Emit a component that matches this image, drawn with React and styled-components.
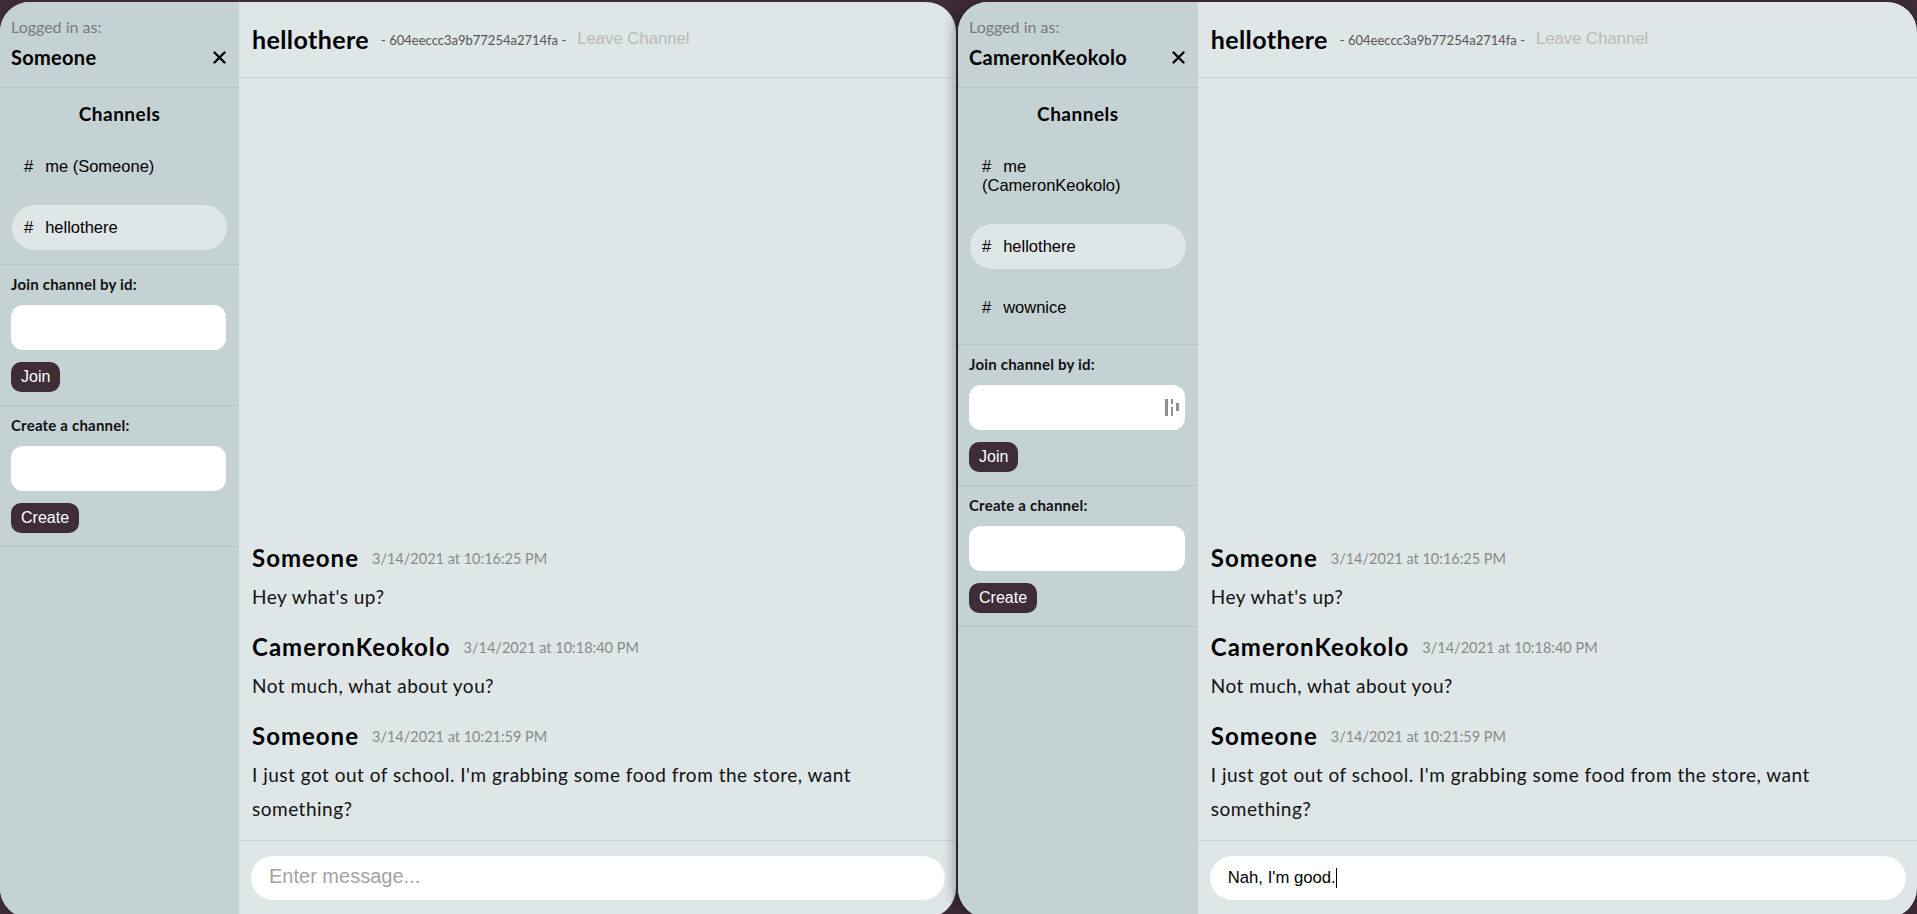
import React from "react";
import styled, { createGlobalStyle } from "styled-components";

const GlobalStyle = createGlobalStyle`
	html, body {
		margin: 0;
		padding: 0;
		background: #3d2c36;
		overflow: hidden;
	}
	* {
		box-sizing: border-box;
	}
`;

const Desktop = styled.div`
	display: grid;
	grid-template-columns: 956px 1fr;
	gap: 2px;
	padding-top: 2px;
	height: 914px;
	overflow: hidden;
	background: #3d2c36;
`;

const Window = styled.div`
	display: flex;
	height: 916px;
	border-radius: 30px;
	overflow: hidden;
	background: #dfe6e7;
	box-shadow: ${(props) =>
		props.raised ? "-5px 0 12px rgba(0, 0, 0, 0.28)" : "none"};
	position: relative;
	z-index: ${(props) => (props.raised ? 2 : 1)};
	font-family: "Lato", "Noto Sans", sans-serif;
	color: #111;
`;

const Sidebar = styled.aside`
	width: 25%;
	flex-shrink: 0;
	background: #c4d2d3;
	display: flex;
	flex-direction: column;
`;

const SideHeader = styled.div`
	padding: 14px 12px 17px 11px;
	border-bottom: 1px solid #b2c1c3;
`;

const LoggedLabel = styled.div`
	font-size: 16px;
	line-height: 22px;
	color: #7a7a7a;
`;

const NameRow = styled.div`
	display: flex;
	justify-content: space-between;
	align-items: center;
	margin-top: 6px;
	height: 26px;
`;

const Username = styled.div`
	font-size: 20px;
	font-weight: 700;
	letter-spacing: 0.3px;
	color: #000;
`;

const CloseButton = styled.button`
	border: none;
	background: none;
	padding: 0;
	margin-right: 1px;
	display: flex;
	align-items: center;
	cursor: pointer;
`;

const ChannelSection = styled.div`
	padding: 14px 12px;
	border-bottom: 1px solid #b2c1c3;
`;

const SectionTitle = styled.div`
	text-align: center;
	font-size: 19px;
	font-weight: 700;
	letter-spacing: 0.5px;
	line-height: 24px;
	color: #000;
`;

const ChannelList = styled.div`
	display: flex;
	flex-direction: column;
	gap: 16px;
	margin-top: 18px;
`;

const ChannelItem = styled.div`
	padding: 13px 40px 13px 12px;
	border-radius: 23px;
	background: ${(props) => (props.active ? "#dfe6e7" : "transparent")};
	font-family: "Liberation Sans", Arial, sans-serif;
	font-size: 16.5px;
	line-height: 19px;
	color: #000;
	cursor: pointer;
`;

const Hash = styled.span`
	margin-right: 12px;
`;

const FormSection = styled.div`
	padding: 10px 13px 13px 11px;
	border-bottom: 1px solid #b2c1c3;
	display: flex;
	flex-direction: column;
	align-items: flex-start;
`;

const FormLabel = styled.label`
	font-size: 15px;
	font-weight: 700;
	letter-spacing: 0.2px;
	line-height: 18px;
	color: #111;
`;

const FieldWrap = styled.div`
	position: relative;
	width: 100%;
	margin-top: 12px;
`;

const TextField = styled.input`
	display: block;
	width: 100%;
	height: 45px;
	border: none;
	border-radius: 12px;
	background: #fff;
	padding: 0 14px;
	font-family: "Liberation Sans", Arial, sans-serif;
	font-size: 16px;
	outline: none;
`;

const ManagerIcon = styled.svg`
	position: absolute;
	right: 5px;
	top: 13px;
`;

const ActionButton = styled.button`
	margin-top: 12px;
	height: 30px;
	padding: 0 10px;
	border: none;
	border-radius: 10px;
	background: #3e2d36;
	color: #fff;
	font-family: "Liberation Sans", Arial, sans-serif;
	font-size: 16px;
	cursor: pointer;
`;

const Main = styled.main`
	flex: 1;
	min-width: 0;
	display: flex;
	flex-direction: column;
`;

const ChatHeader = styled.header`
	height: 76px;
	flex-shrink: 0;
	display: flex;
	align-items: center;
	padding: 0 13px 1px;
	border-bottom: 1px solid #c7d2d4;
`;

const ChannelTitle = styled.h1`
	margin: 0;
	font-size: 25px;
	font-weight: 700;
	letter-spacing: 0.4px;
	line-height: 30px;
	color: #000;
`;

const ChannelId = styled.span`
	margin: 2px 0 0 12px;
	font-size: 13px;
	color: #555;
`;

const LeaveButton = styled.button`
	margin-left: 11px;
	border: none;
	background: none;
	padding: 0;
	font-family: "Liberation Sans", Arial, sans-serif;
	font-size: 16.7px;
	color: #b9b9b9;
	cursor: pointer;
`;

const MessageList = styled.div`
	flex: 1;
	min-height: 0;
	display: flex;
	flex-direction: column;
	justify-content: flex-end;
	padding: 0 13px 14px;
	overflow: hidden;
`;

const Message = styled.div`
	& + & {
		margin-top: 15px;
	}
`;

const MessageHead = styled.div`
	display: flex;
	align-items: center;
	height: 36px;
	line-height: 36px;
`;

const Author = styled.span`
	font-size: 24px;
	font-weight: 700;
	letter-spacing: 1px;
	color: #000;
`;

const Time = styled.span`
	margin: 2px 0 0 13px;
	font-size: 14.5px;
	line-height: 1;
	color: #8a8a8a;
`;

const MessageBody = styled.div`
	margin-top: 4px;
	font-size: 19px;
	letter-spacing: 0.5px;
	line-height: 34px;
	color: #111;
`;

const Footer = styled.footer`
	flex-shrink: 0;
	border-top: 1px solid #c7d2d4;
	padding: 15px 11px 18px 12px;
`;

const InputWrap = styled.div`
	position: relative;
`;

const MessageInput = styled.input`
	display: block;
	width: 100%;
	height: 44px;
	border: none;
	border-radius: 22px;
	background: #fff;
	padding: 0 18px;
	font-family: "Liberation Sans", Arial, sans-serif;
	font-size: 16.7px;
	color: #000;
	outline: none;
	caret-color: transparent;

	&::placeholder {
		font-size: 20px;
		color: #a3a3a3;
	}
`;

const Caret = styled.span`
	position: absolute;
	top: 12px;
	left: ${(props) => props.offset}px;
	width: 1px;
	height: 20px;
	background: #000;
`;

const messages = [
	{ id: 1, author: "Someone", time: "3/14/2021 at 10:16:25 PM", text: "Hey what's up?" },
	{ id: 2, author: "CameronKeokolo", time: "3/14/2021 at 10:18:40 PM", text: "Not much, what about you?" },
	{
		id: 3,
		author: "Someone",
		time: "3/14/2021 at 10:21:59 PM",
		text: "I just got out of school. I'm grabbing some food from the store, want something?",
	},
];

const CloseIcon = () => (
	<svg width="13" height="13" viewBox="0 0 13 13">
		<path d="M1.5 1.5 L11.5 11.5 M11.5 1.5 L1.5 11.5" stroke="#000" strokeWidth="2.4" strokeLinecap="round" />
	</svg>
);

const PasswordIcon = () => (
	<ManagerIcon width="16" height="18" viewBox="0 0 16 18">
		<rect x="1" y="1" width="3" height="17" fill="#8f8f8f" />
		<rect x="7" y="1" width="2" height="5" fill="#8f8f8f" />
		<rect x="7" y="9" width="2" height="9" fill="#8f8f8f" />
		<rect x="12" y="5" width="3" height="8" fill="#8f8f8f" />
	</ManagerIcon>
);

const ChatWindow = ({ user, channels, draft, raised, withManager }) => (
	<Window raised={raised}>
		<Sidebar>
			<SideHeader>
				<LoggedLabel>Logged in as:</LoggedLabel>
				<NameRow>
					<Username>{user}</Username>
					<CloseButton aria-label="Log out">
						<CloseIcon />
					</CloseButton>
				</NameRow>
			</SideHeader>
			<ChannelSection>
				<SectionTitle>Channels</SectionTitle>
				<ChannelList>
					{channels.map((ch) => (
						<ChannelItem key={ch.name} active={ch.active}>
							<Hash>#</Hash>
							{ch.name}
						</ChannelItem>
					))}
				</ChannelList>
			</ChannelSection>
			<FormSection>
				<FormLabel>Join channel by id:</FormLabel>
				<FieldWrap>
					<TextField type="text" />
					{withManager && <PasswordIcon />}
				</FieldWrap>
				<ActionButton>Join</ActionButton>
			</FormSection>
			<FormSection>
				<FormLabel>Create a channel:</FormLabel>
				<FieldWrap>
					<TextField type="text" />
				</FieldWrap>
				<ActionButton>Create</ActionButton>
			</FormSection>
		</Sidebar>
		<Main>
			<ChatHeader>
				<ChannelTitle>hellothere</ChannelTitle>
				<ChannelId>- 604eeccc3a9b77254a2714fa -</ChannelId>
				<LeaveButton>Leave Channel</LeaveButton>
			</ChatHeader>
			<MessageList>
				{messages.map((m) => (
					<Message key={m.id}>
						<MessageHead>
							<Author>{m.author}</Author>
							<Time>{m.time}</Time>
						</MessageHead>
						<MessageBody>{m.text}</MessageBody>
					</Message>
				))}
			</MessageList>
			<Footer>
				<InputWrap>
					<MessageInput
						type="text"
						placeholder="Enter message..."
						defaultValue={draft}
					/>
					{draft && <Caret offset={126} />}
				</InputWrap>
			</Footer>
		</Main>
	</Window>
);

const App = () => (
	<>
		<GlobalStyle />
		<Desktop>
			<ChatWindow
				user="Someone"
				channels={[
					{ name: "me (Someone)" },
					{ name: "hellothere", active: true },
				]}
			/>
			<ChatWindow
				raised
				withManager
				user="CameronKeokolo"
				draft="Nah, I'm good."
				channels={[
					{ name: "me (CameronKeokolo)" },
					{ name: "hellothere", active: true },
					{ name: "wownice" },
				]}
			/>
		</Desktop>
	</>
);

export default App;
